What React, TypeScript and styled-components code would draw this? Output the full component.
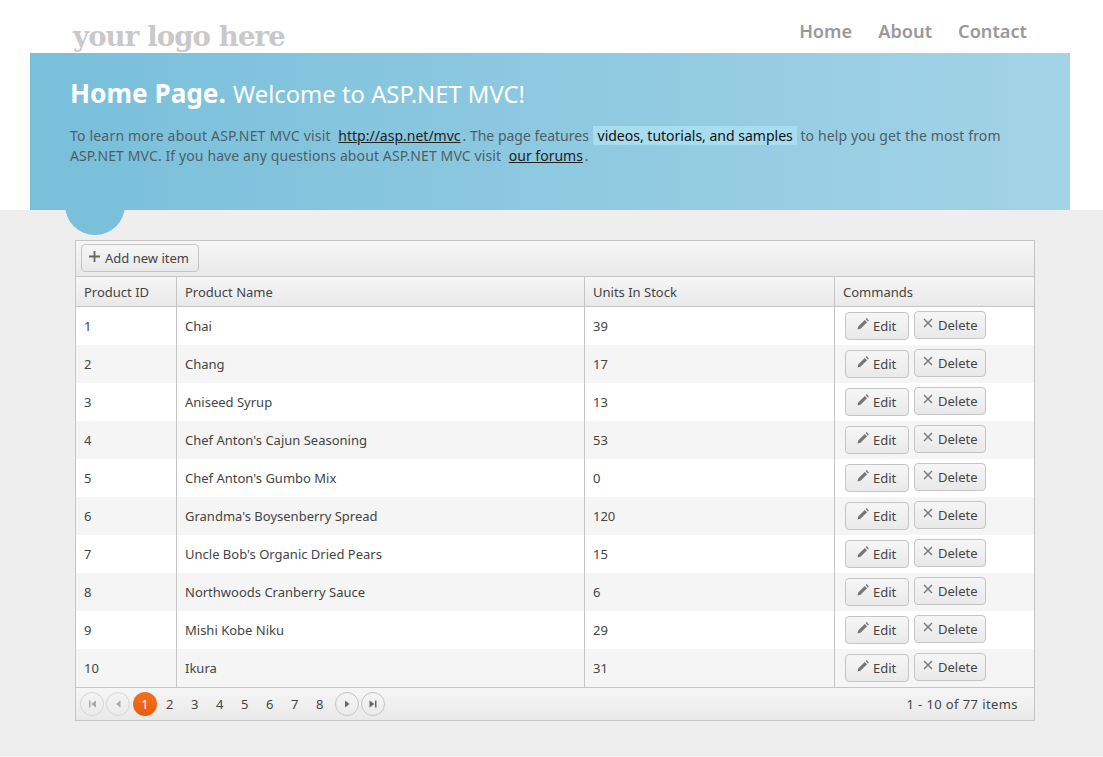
import * as React from "react"
import styled, { createGlobalStyle } from "styled-components"

const GlobalStyle = createGlobalStyle`
  html, body {
    margin: 0;
    padding: 0;
    background: #fff;
    font-family: "Noto Sans", "Open Sans", sans-serif;
  }
`

const products = [
  { id: 1, name: "Chai", stock: 39 },
  { id: 2, name: "Chang", stock: 17 },
  { id: 3, name: "Aniseed Syrup", stock: 13 },
  { id: 4, name: "Chef Anton's Cajun Seasoning", stock: 53 },
  { id: 5, name: "Chef Anton's Gumbo Mix", stock: 0 },
  { id: 6, name: "Grandma's Boysenberry Spread", stock: 120 },
  { id: 7, name: "Uncle Bob's Organic Dried Pears", stock: 15 },
  { id: 8, name: "Northwoods Cranberry Sauce", stock: 6 },
  { id: 9, name: "Mishi Kobe Niku", stock: 29 },
  { id: 10, name: "Ikura", stock: 31 },
]

const PlusIcon = () => (
  <svg width="11" height="11" viewBox="0 0 11 11">
    <path d="M4.6 0h1.8v4.6H11v1.8H6.4V11H4.6V6.4H0V4.6h4.6z" fill="#666" />
  </svg>
)

const PencilIcon = () => (
  <svg width="12" height="12" viewBox="0 0 12 12">
    <path d="M0.5 11.5l0.7-3 6.6-6.6 2.3 2.3-6.6 6.6zM8.6 1.1l1-1 2.3 2.3-1 1z" fill="#777" />
  </svg>
)

const CrossIcon = () => (
  <svg width="10" height="10" viewBox="0 0 10 10">
    <path d="M1 1l8 8M9 1l-8 8" stroke="#777" strokeWidth="1.4" fill="none" />
  </svg>
)

const SeekIcon = ({ kind, faded }: { kind: "first" | "prev" | "next" | "last"; faded?: boolean }) => {
  const d = {
    first: "M2 1.5h1.5v7H2zM9 1.5v7L4 5z",
    prev: "M7.5 1.5v7L3 5z",
    next: "M3 1.5v7L7.5 5z",
    last: "M1.5 1.5v7L6.5 5zM7 1.5h1.5v7H7z",
  }[kind]
  return (
    <svg width="10" height="10" viewBox="0 0 10 10">
      <path d={d} fill={faded ? "#aaa" : "#666"} />
    </svg>
  )
}

const App = () => (
  <>
    <GlobalStyle />
    <Header>
      <Logo>your logo here</Logo>
      <Nav>
        <NavLink>Home</NavLink>
        <NavLink>About</NavLink>
        <NavLink>Contact</NavLink>
      </Nav>
    </Header>
    <Hero>
      <Title>
        <strong>Home Page.</strong> Welcome to ASP.NET MVC!
      </Title>
      <Intro>
        <Run $track={0.19}>To learn more about ASP.NET MVC visit</Run> <InlineLink>http://asp.net/mvc</InlineLink>. The
        page features <Mark>videos, tutorials, and samples</Mark> <Run $track={0.12}>to help you get the most from</Run>{" "}
        <Run $track={0.11}>ASP.NET MVC. If you have any questions about ASP.NET MVC visit</Run>{" "}
        <InlineLink>our forums</InlineLink>.
      </Intro>
    </Hero>
    <Main>
      <Bubble />
      <Grid>
        <Toolbar>
          <AddButton>
            <PlusIcon />
            Add new item
          </AddButton>
        </Toolbar>
        <Table>
          <colgroup>
            <col width="100" />
            <col width="408" />
            <col width="250" />
            <col />
          </colgroup>
          <thead>
            <tr>
              <Th>Product ID</Th>
              <Th>Product Name</Th>
              <Th>Units In Stock</Th>
              <Th>Commands</Th>
            </tr>
          </thead>
          <tbody>
            {products.map((p, i) => (
              <Row key={p.id} $alt={i % 2 === 1}>
                <Td>{p.id}</Td>
                <Td>{p.name}</Td>
                <Td>{p.stock}</Td>
                <Td>
                  <Commands>
                    <EditButton>
                      <PencilIcon />
                      Edit
                    </EditButton>
                    <DeleteButton>
                      <CrossIcon />
                      Delete
                    </DeleteButton>
                  </Commands>
                </Td>
              </Row>
            ))}
          </tbody>
        </Table>
        <Pager>
          <PagerLeft>
            <ArrowButton $faded>
              <SeekIcon kind="first" faded />
            </ArrowButton>
            <ArrowButton $faded>
              <SeekIcon kind="prev" faded />
            </ArrowButton>
            <CurrentPage>1</CurrentPage>
            <PageList>
              {[2, 3, 4, 5, 6, 7, 8].map(n => (
                <PageNumber key={n}>{n}</PageNumber>
              ))}
            </PageList>
            <ArrowButton>
              <SeekIcon kind="next" />
            </ArrowButton>
            <ArrowButton>
              <SeekIcon kind="last" />
            </ArrowButton>
          </PagerLeft>
          <PagerInfo>1 - 10 of 77 items</PagerInfo>
        </Pager>
      </Grid>
    </Main>
  </>
)

const Header = styled.header`
  height: 53px;
  margin: 0 30px;
  padding: 0 46px 0 42px;
  display: flex;
  justify-content: space-between;
`

const Logo = styled.div`
  font-family: "DejaVu Serif", serif;
  font-weight: 700;
  font-size: 27.5px;
  letter-spacing: -0.85px;
  line-height: 36px;
  padding: 18px 0 0 1px;
  color: #c9c9c9;
  white-space: nowrap;
`

const Nav = styled.nav`
  display: flex;
  gap: 26px;
  padding-top: 19px;
`

const NavLink = styled.a`
  font-size: 18.2px;
  font-weight: 600;
  line-height: 24px;
  color: #999;
`

const Hero = styled.section`
  position: relative;
  height: 157px;
  box-sizing: border-box;
  margin: 0 33px 0 30px;
  padding: 22px 50px 0 40px;
  background: linear-gradient(to right, #78bfda, #a3d3e6);
`

const Title = styled.h1`
  margin: 0;
  font-size: 23.8px;
  line-height: 36px;
  font-weight: 400;
  color: #fff;

  strong {
    margin-right: 1px;
    font-size: 26.2px;
    font-weight: 700;
  }
`

const Intro = styled.p`
  margin: 14px 0 0;
  font-size: 14px;
  line-height: 20px;
  color: #4e5e68;
`

const Run = styled.span<{ $track: number }>`
  letter-spacing: ${({ $track }) => $track}px;
`

const InlineLink = styled.a`
  padding: 0 2px 0 4px;
  color: #222;
  text-decoration: underline;
`

const Mark = styled.span`
  padding: 0 4px 0 5px;
  background: #a8dcef;
  color: #111;
`

const Main = styled.main`
  position: relative;
  height: 547px;
  box-sizing: border-box;
  padding: 30px 68px 0 75px;
  background: #eee;
  border-bottom: 1px solid #f6f6f6;
`

const Bubble = styled.div`
  position: absolute;
  top: -35px;
  left: 65px;
  width: 60px;
  height: 60px;
  border-radius: 50%;
  background: #7bc0da;
`

const Grid = styled.div`
  width: 958px;
  border: 1px solid #c5c5c5;
  background: #fff;
  font-size: 13px;
  color: #444;
`

const Toolbar = styled.div`
  height: 36px;
  box-sizing: border-box;
  padding: 3px 5px;
  border-bottom: 1px solid #c5c5c5;
  background: linear-gradient(#f6f6f6, #e9e9e9);
`

const Button = styled.button`
  display: inline-flex;
  align-items: center;
  box-sizing: border-box;
  height: 28px;
  padding: 0;
  border: 1px solid #c5c5c5;
  border-radius: 4px;
  background: linear-gradient(#f6f6f6, #e9e9e9);
  font: inherit;
  color: #444;
`

const AddButton = styled(Button)`
  width: 118px;
  padding-left: 7px;
  gap: 5px;

  svg {
    margin-bottom: 3px;
  }
`

const Table = styled.table`
  width: 100%;
  table-layout: fixed;
  border-collapse: separate;
  border-spacing: 0;
`

const Th = styled.th`
  height: 30px;
  box-sizing: border-box;
  padding: 0 8px;
  font-weight: 400;
  text-align: left;
  border-left: 1px solid #c5c5c5;
  border-bottom: 1px solid #c5c5c5;
  background: linear-gradient(#f6f6f6, #e9e9e9);

  &:first-child {
    border-left: 0;
  }
`

const Row = styled.tr<{ $alt?: boolean }>`
  height: 38px;
  background: ${({ $alt }) => ($alt ? "#f5f5f5" : "#fff")};
`

const Td = styled.td`
  box-sizing: border-box;
  padding: 0 8px;
  border-left: 1px solid #c5c5c5;

  &:first-child {
    border-left: 0;
  }
`

const Commands = styled.div`
  display: flex;
  align-items: flex-start;
  height: 28px;
  gap: 5px;
  padding-left: 2px;
`

const EditButton = styled(Button)`
  width: 64px;
  padding-left: 11px;
  gap: 4px;

  svg {
    margin-bottom: 4px;
  }
`

const DeleteButton = styled(Button)`
  width: 72px;
  margin-top: -1px;
  padding-left: 8px;
  gap: 5px;

  svg {
    margin-bottom: 4px;
  }
`

const Pager = styled.div`
  height: 33px;
  box-sizing: border-box;
  padding: 0 16px 0 4px;
  display: flex;
  align-items: center;
  justify-content: space-between;
  border-top: 1px solid #c5c5c5;
  background: linear-gradient(#f6f6f6, #e9e9e9);
`

const PagerLeft = styled.div`
  display: flex;
  align-items: center;
`

const Circle = styled.span`
  display: flex;
  align-items: center;
  justify-content: center;
  box-sizing: border-box;
  width: 24px;
  height: 24px;
  border-radius: 50%;
`

const ArrowButton = styled(Circle)<{ $faded?: boolean }>`
  margin-right: 2px;
  border: 1px solid ${({ $faded }) => ($faded ? "#d6d6d6" : "#c5c5c5")};
`

const CurrentPage = styled(Circle)`
  margin-left: 1px;
  color: #fff;
  background: linear-gradient(#f2711e, #e75d10);
`

const PageList = styled.div`
  display: flex;
  margin: 0 3px 0 0;
`

const PageNumber = styled.span`
  width: 25px;
  padding-left: 0.5px;
  box-sizing: border-box;
  text-align: center;
`

const PagerInfo = styled.span`
  letter-spacing: 0.4px;
  white-space: nowrap;
`

export default App
